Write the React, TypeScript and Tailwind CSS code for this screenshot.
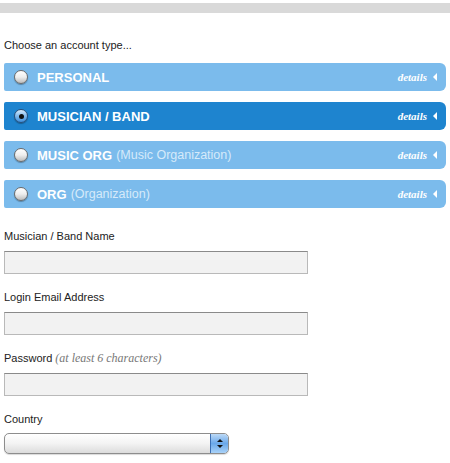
const accountTypes = [
  { id: 'personal', title: 'PERSONAL', sub: '' },
  { id: 'musician', title: 'MUSICIAN / BAND', sub: '' },
  { id: 'musicorg', title: 'MUSIC ORG', sub: '(Music Organization)' },
  { id: 'org', title: 'ORG', sub: '(Organization)' },
]

function Radio({ checked }: { checked: boolean }) {
  if (checked) {
    return (
      <span className="flex h-[14px] w-[14px] items-center justify-center rounded-full border border-[#2a4f7a] bg-gradient-to-b from-[#d9ecfb] via-[#7fb9ec] to-[#3d8fdc] shadow-[0_1px_1px_rgba(0,0,0,0.3)]">
        <span className="h-[5px] w-[5px] rounded-full bg-[#111]" />
      </span>
    )
  }
  return (
    <span className="block h-[14px] w-[14px] rounded-full border border-[#6b6b6b] bg-gradient-to-b from-[#ffffff] via-[#eeeeee] to-[#bdbdbd] shadow-[0_1px_1px_rgba(0,0,0,0.3)]" />
  )
}

function AccountRow({ title, sub, active }: { title: string; sub: string; active: boolean }) {
  return (
    <div
      className={`flex h-[28px] items-center rounded-l-[2px] rounded-r-[6px] pl-[10px] pr-[9px] ${
        active ? 'bg-[#1e84cf]' : 'bg-[#7bbbec]'
      }`}
    >
      <Radio checked={active} />
      <span className="ml-[9px] text-[13px] font-bold leading-none text-white">{title}</span>
      {sub && <span className="ml-[4px] text-[12.5px] leading-none text-[#d6eafa]">{sub}</span>}
      <span className="ml-auto font-['Liberation_Serif',serif] text-[11px] font-bold italic leading-none text-white">
        details
      </span>
      <span className="ml-[6px] h-0 w-0 border-y-[4px] border-r-[4px] border-y-transparent border-r-white" />
    </div>
  )
}

function TextField({ label, hint }: { label: string; hint?: string }) {
  return (
    <div className="flex flex-col">
      <label className="text-[11px] leading-[13px] text-[#222]">
        {label}
        {hint && (
          <span className="ml-[3px] font-['Liberation_Serif',serif] text-[12px] italic text-[#777]">{hint}</span>
        )}
      </label>
      <div className="mt-[8px] h-[23px] w-[304px] border border-[#b9b9b9] border-t-[#8a8a8a] bg-[#f2f2f2]" />
    </div>
  )
}

export default function App() {
  return (
    <div className="min-h-[463px] bg-white pt-[3px] font-['Liberation_Sans',Arial,sans-serif]">
      <div className="h-[10px] w-full bg-[#d9d9d9]" />

      <div className="px-[4px]">
        <p className="mt-[26px] text-[11px] leading-[13px] text-[#222]">Choose an account type...</p>

        <div className="mt-[11px] flex flex-col gap-[11px]">
          {accountTypes.map((t) => (
            <AccountRow key={t.id} title={t.title} sub={t.sub} active={t.id === 'musician'} />
          ))}
        </div>

        <div className="mt-[22px] flex flex-col gap-[17px]">
          <TextField label="Musician / Band Name" />
          <TextField label="Login Email Address" />
          <TextField label="Password" hint="(at least 6 characters)" />

          <div className="flex flex-col">
            <label className="text-[11px] leading-[13px] text-[#222]">Country</label>
            <div className="mt-[7px] flex h-[21px] w-[225px] overflow-hidden rounded-[5px] border border-[#8d8d8d] bg-gradient-to-b from-[#ffffff] via-[#f3f3f3] to-[#dcdcdc] shadow-[0_1px_1px_rgba(0,0,0,0.15)]">
              <div className="flex-1" />
              <div className="flex w-[18px] flex-col items-center justify-center gap-[3px] rounded-r-[4px] border-l border-[#3d6fb3] bg-gradient-to-b from-[#bcd9f6] via-[#6aa8ea] to-[#a9d2f8]">
                <span className="h-0 w-0 border-x-[3px] border-b-[3px] border-x-transparent border-b-[#111]" />
                <span className="h-0 w-0 border-x-[3px] border-t-[3px] border-x-transparent border-t-[#111]" />
              </div>
            </div>
          </div>
        </div>
      </div>
    </div>
  )
}
